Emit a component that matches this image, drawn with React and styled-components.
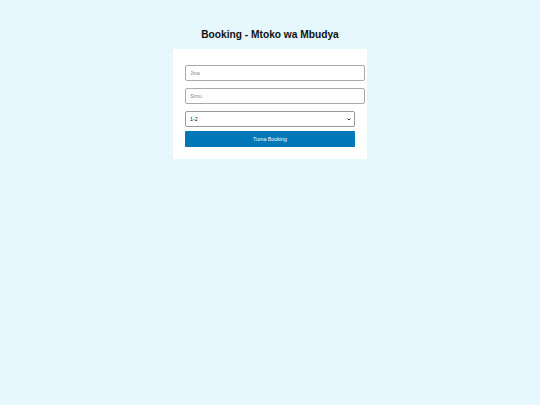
import styled, { createGlobalStyle } from 'styled-components';

const GlobalStyle = createGlobalStyle`
  html, body {
    margin: 0;
    background-color: #e6f7fe;
    font-family: "Liberation Sans", Arial, sans-serif;
  }
`;

const Page = styled.div`
  display: flex;
  flex-direction: column;
  align-items: center;
  padding-top: 28px;
`;

const Title = styled.h1`
  font-size: 10.2px;
  font-weight: bold;
  color: #111;
  margin: 0 0 8px;
  line-height: 13px;
`;

const Card = styled.form`
  display: flex;
  flex-direction: column;
  align-items: flex-start;
  width: 170px;
  padding: 16px 12px 12px;
  background-color: #fff;
`;

const Input = styled.input`
  width: 100%;
  box-sizing: content-box;
  padding: 4px;
  margin: 0 0 7px;
  border: 1px solid #aaa;
  border-radius: 2px;
  font-family: inherit;
  font-size: 5.3px;
  line-height: 6px;
  height: 6px;
  color: #333;
  outline: none;
  &::placeholder {
    color: #888;
  }
`;

const Select = styled.select`
  appearance: none;
  width: 100%;
  height: 16px;
  margin: 0 0 4px;
  padding: 0 4px;
  border: 1px solid #999;
  border-radius: 2px;
  font-family: inherit;
  font-size: 5.3px;
  color: #111;
  background-color: #fff;
  background-image: url("data:image/svg+xml,%3Csvg xmlns='http://www.w3.org/2000/svg' width='4' height='3' viewBox='0 0 8 6'%3E%3Cpath d='M1 1l3 3 3-3' fill='none' stroke='%23222' stroke-width='1.8'/%3E%3C/svg%3E");
  background-repeat: no-repeat;
  background-position: right 3px center;
  background-size: 4px 3px;
`;

const SubmitBtn = styled.button`
  width: 100%;
  height: 16px;
  border: none;
  border-radius: 1px;
  background-color: #0077b6;
  color: #fff;
  font-family: inherit;
  font-size: 5.3px;
  padding: 0;
`;

const App = () => {
  return (
    <>
      <GlobalStyle />
      <Page>
        <Title>Booking - Mtoko wa Mbudya</Title>
        <Card onSubmit={(e) => e.preventDefault()}>
          <Input placeholder="Jina" />
          <Input placeholder="Simu" />
          <Select defaultValue="1-2">
            <option value="1-2">1-2</option>
            <option value="3-5">3-5</option>
            <option value="6+">6+</option>
          </Select>
          <SubmitBtn type="submit">Tuma Booking</SubmitBtn>
        </Card>
      </Page>
    </>
  );
};

export default App;
